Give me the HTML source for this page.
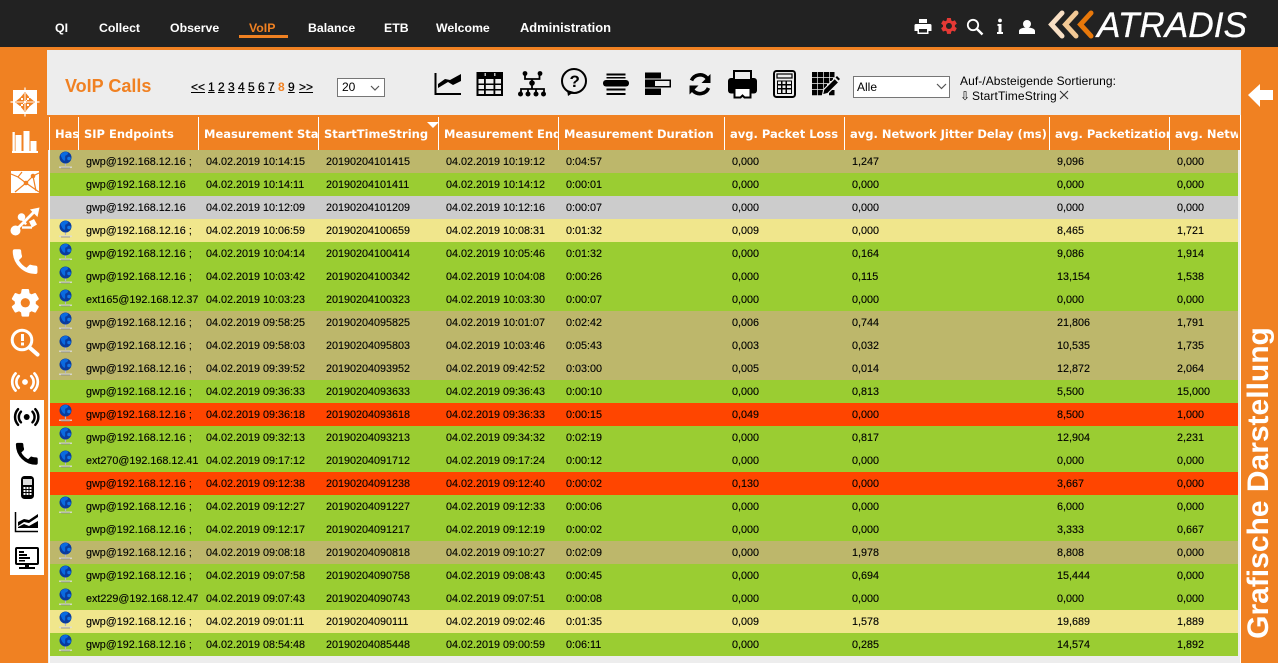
<!DOCTYPE html>
<html><head><meta charset="utf-8"><title>VoIP Calls</title>
<style>
*{box-sizing:border-box}
html,body{margin:0;padding:0;width:1278px;height:663px;overflow:hidden;background:#f08122;font-family:"Liberation Sans",Arial,sans-serif;color:#000}
.abs{position:absolute}
#top{position:absolute;left:0;top:0;width:1278px;height:47px;background:#222}
#top a{position:absolute;top:20px;font:bold 12.3px/16px "Liberation Sans",sans-serif;color:#fff;white-space:nowrap}
#top a.on{color:#f08122}
#ul{position:absolute;left:239px;top:35px;width:49px;height:3px;background:#f08122}
#panel{position:absolute;left:47px;top:50px;width:1194px;height:65px;background:#ededed}
#main{position:absolute;left:48px;top:115px;width:1193px;height:548px;background:#ededed}
#hbg{position:absolute;left:47px;top:115px;width:1193px;height:35px;background:#f08122}
#wl1{position:absolute;left:49px;top:117px;width:1px;height:546px;background:#fff}
#wl2{position:absolute;left:1240px;top:115px;width:1px;height:548px;background:#fff}
#wbox{position:absolute;left:10px;top:400px;width:34px;height:175px;background:#fff}
table{position:absolute;left:50px;top:117px;border-collapse:separate;border-spacing:0;table-layout:fixed;width:1188px}
th{height:33px;padding:0 0 0 5px;text-align:left;color:#fff;font:bold 11.5px/16px "DejaVu Sans",Verdana,sans-serif;white-space:nowrap;overflow:hidden;border-right:1px solid #fff;background:#f08122}
th:last-child{border-right:0}
td{height:23px;padding:1px 0 0 7px;font-size:10.8px;line-height:22px;white-space:nowrap;overflow:hidden;color:#000;-webkit-text-stroke:.12px #000}
tr{height:23px}
.o td{background:#bdb76b}.g td{background:#9acd32}.s td{background:#ccc}.y td{background:#f0e68c}.r td{background:#ff4500}
#title{position:absolute;left:65px;top:76px;font:bold 18px/20px "Liberation Sans",sans-serif;color:#f08122;white-space:nowrap}
#pg span{position:absolute;top:80px;font-size:12px;line-height:14px;text-decoration:underline;color:#000;-webkit-text-stroke:.25px #000}
#pg b{position:absolute;top:80px;font-size:12px;line-height:14px;color:#f08122}
.sel{position:absolute;background:#fff;border:1px solid #767676;font-size:12px;padding-left:4px;color:#000}
#s1{left:337px;top:78px;width:48px;height:19px;line-height:17px}
#s2{left:853px;top:76px;width:97px;height:22px;line-height:20px;padding-left:3px}
#lab{position:absolute;left:960px;top:74px;font-size:12px;line-height:15px;white-space:nowrap;letter-spacing:.07px}
.sr{position:absolute;top:89px;font-size:12px;line-height:15px;white-space:nowrap}
#vert{position:absolute;left:1259px;top:483px;transform:translate(-50%,-50%) rotate(-90deg);font:bold 30px/34px "Liberation Sans",sans-serif;color:#fff;white-space:nowrap}
svg{position:absolute;left:0;top:0;pointer-events:none}
</style></head><body>
<div id="top">
<a style="left:55px">QI</a><a style="left:99px">Collect</a><a style="left:170px">Observe</a><a class="on" style="left:249px">VoIP</a><a style="left:308px">Balance</a><a style="left:384px">ETB</a><a style="left:436px">Welcome</a><a style="left:520px;font-size:12.9px">Administration</a>
<div id="ul"></div>
</div>
<div id="panel"></div>
<div id="main"></div>
<div id="hbg"></div>
<div id="wl1"></div><div id="wl2"></div>
<div id="wbox"></div>
<div id="title">VoIP Calls</div>
<div id="pg">
<span style="left:191px">&lt;&lt;</span><span style="left:208px">1</span><span style="left:218px">2</span><span style="left:228px">3</span><span style="left:238px">4</span><span style="left:248px">5</span><span style="left:258px">6</span><span style="left:268px">7</span><b style="left:278px">8</b><span style="left:288px">9</span><span style="left:299px">&gt;&gt;</span>
</div>
<div class="sel" id="s1">20</div>
<div class="sel" id="s2">Alle</div>
<div id="lab">Auf-/Absteigende Sortierung:</div>
<div class="sr" style="left:960px">&#8681;</div>
<div class="sr" style="left:972px;letter-spacing:.13px">StartTimeString</div>

<div id="vert">Grafische Darstellung</div>

<table>
<colgroup><col style="width:29px"><col style="width:120px"><col style="width:120px"><col style="width:120px"><col style="width:120px"><col style="width:166px"><col style="width:120px"><col style="width:205px"><col style="width:120px"><col style="width:68px"></colgroup>
<tr style="height:33px"><th>Has</th><th>SIP Endpoints</th><th>Measurement Start</th><th>StartTimeString</th><th>Measurement End</th><th>Measurement Duration</th><th>avg. Packet Loss</th><th>avg. Network Jitter Delay (ms)</th><th>avg. Packetization</th><th>avg. Network</th></tr>
<tr class="o"><td></td><td>gwp@192.168.12.16 ;</td><td>04.02.2019 10:14:15</td><td>20190204101415</td><td>04.02.2019 10:19:12</td><td>0:04:57</td><td>0,000</td><td>1,247</td><td>9,096</td><td>0,000</td></tr>
<tr class="g"><td></td><td>gwp@192.168.12.16</td><td>04.02.2019 10:14:11</td><td>20190204101411</td><td>04.02.2019 10:14:12</td><td>0:00:01</td><td>0,000</td><td>0,000</td><td>0,000</td><td>0,000</td></tr>
<tr class="s"><td></td><td>gwp@192.168.12.16</td><td>04.02.2019 10:12:09</td><td>20190204101209</td><td>04.02.2019 10:12:16</td><td>0:00:07</td><td>0,000</td><td>0,000</td><td>0,000</td><td>0,000</td></tr>
<tr class="y"><td></td><td>gwp@192.168.12.16 ;</td><td>04.02.2019 10:06:59</td><td>20190204100659</td><td>04.02.2019 10:08:31</td><td>0:01:32</td><td>0,009</td><td>0,000</td><td>8,465</td><td>1,721</td></tr>
<tr class="g"><td></td><td>gwp@192.168.12.16 ;</td><td>04.02.2019 10:04:14</td><td>20190204100414</td><td>04.02.2019 10:05:46</td><td>0:01:32</td><td>0,000</td><td>0,164</td><td>9,086</td><td>1,914</td></tr>
<tr class="g"><td></td><td>gwp@192.168.12.16 ;</td><td>04.02.2019 10:03:42</td><td>20190204100342</td><td>04.02.2019 10:04:08</td><td>0:00:26</td><td>0,000</td><td>0,115</td><td>13,154</td><td>1,538</td></tr>
<tr class="g"><td></td><td>ext165@192.168.12.37</td><td>04.02.2019 10:03:23</td><td>20190204100323</td><td>04.02.2019 10:03:30</td><td>0:00:07</td><td>0,000</td><td>0,000</td><td>0,000</td><td>0,000</td></tr>
<tr class="o"><td></td><td>gwp@192.168.12.16 ;</td><td>04.02.2019 09:58:25</td><td>20190204095825</td><td>04.02.2019 10:01:07</td><td>0:02:42</td><td>0,006</td><td>0,744</td><td>21,806</td><td>1,791</td></tr>
<tr class="o"><td></td><td>gwp@192.168.12.16 ;</td><td>04.02.2019 09:58:03</td><td>20190204095803</td><td>04.02.2019 10:03:46</td><td>0:05:43</td><td>0,003</td><td>0,032</td><td>10,535</td><td>1,735</td></tr>
<tr class="o"><td></td><td>gwp@192.168.12.16 ;</td><td>04.02.2019 09:39:52</td><td>20190204093952</td><td>04.02.2019 09:42:52</td><td>0:03:00</td><td>0,005</td><td>0,014</td><td>12,872</td><td>2,064</td></tr>
<tr class="g"><td></td><td>gwp@192.168.12.16 ;</td><td>04.02.2019 09:36:33</td><td>20190204093633</td><td>04.02.2019 09:36:43</td><td>0:00:10</td><td>0,000</td><td>0,813</td><td>5,500</td><td>15,000</td></tr>
<tr class="r"><td></td><td>gwp@192.168.12.16 ;</td><td>04.02.2019 09:36:18</td><td>20190204093618</td><td>04.02.2019 09:36:33</td><td>0:00:15</td><td>0,049</td><td>0,000</td><td>8,500</td><td>1,000</td></tr>
<tr class="g"><td></td><td>gwp@192.168.12.16 ;</td><td>04.02.2019 09:32:13</td><td>20190204093213</td><td>04.02.2019 09:34:32</td><td>0:02:19</td><td>0,000</td><td>0,817</td><td>12,904</td><td>2,231</td></tr>
<tr class="g"><td></td><td>ext270@192.168.12.41</td><td>04.02.2019 09:17:12</td><td>20190204091712</td><td>04.02.2019 09:17:24</td><td>0:00:12</td><td>0,000</td><td>0,000</td><td>0,000</td><td>0,000</td></tr>
<tr class="r"><td></td><td>gwp@192.168.12.16 ;</td><td>04.02.2019 09:12:38</td><td>20190204091238</td><td>04.02.2019 09:12:40</td><td>0:00:02</td><td>0,130</td><td>0,000</td><td>3,667</td><td>0,000</td></tr>
<tr class="g"><td></td><td>gwp@192.168.12.16 ;</td><td>04.02.2019 09:12:27</td><td>20190204091227</td><td>04.02.2019 09:12:33</td><td>0:00:06</td><td>0,000</td><td>0,000</td><td>6,000</td><td>0,000</td></tr>
<tr class="g"><td></td><td>gwp@192.168.12.16 ;</td><td>04.02.2019 09:12:17</td><td>20190204091217</td><td>04.02.2019 09:12:19</td><td>0:00:02</td><td>0,000</td><td>0,000</td><td>3,333</td><td>0,667</td></tr>
<tr class="o"><td></td><td>gwp@192.168.12.16 ;</td><td>04.02.2019 09:08:18</td><td>20190204090818</td><td>04.02.2019 09:10:27</td><td>0:02:09</td><td>0,000</td><td>1,978</td><td>8,808</td><td>0,000</td></tr>
<tr class="g"><td></td><td>gwp@192.168.12.16 ;</td><td>04.02.2019 09:07:58</td><td>20190204090758</td><td>04.02.2019 09:08:43</td><td>0:00:45</td><td>0,000</td><td>0,694</td><td>15,444</td><td>0,000</td></tr>
<tr class="g"><td></td><td>ext229@192.168.12.47</td><td>04.02.2019 09:07:43</td><td>20190204090743</td><td>04.02.2019 09:07:51</td><td>0:00:08</td><td>0,000</td><td>0,000</td><td>0,000</td><td>0,000</td></tr>
<tr class="y"><td></td><td>gwp@192.168.12.16 ;</td><td>04.02.2019 09:01:11</td><td>20190204090111</td><td>04.02.2019 09:02:46</td><td>0:01:35</td><td>0,009</td><td>1,578</td><td>19,689</td><td>1,889</td></tr>
<tr class="g"><td></td><td>gwp@192.168.12.16 ;</td><td>04.02.2019 08:54:48</td><td>20190204085448</td><td>04.02.2019 09:00:59</td><td>0:06:11</td><td>0,000</td><td>0,285</td><td>14,574</td><td>1,892</td></tr>
</table>

<svg width="1278" height="663" viewBox="0 0 1278 663" xmlns="http://www.w3.org/2000/svg">
<defs>
<g id="globe"><path d="M59 166.500h13v1.500H59z" fill="#dcdcdc" opacity=".85"/><path d="M61 168h9" stroke="#8a8a8a" stroke-width=".8"/><path d="M65.500 163v3" stroke="#b0b4c8" stroke-width="1.200"/><circle cx="65.500" cy="157.500" r="6" fill="#0a3c9e"/><path d="M60.500 155c2-3 5-3.500 7-2.800 1.500 1.500-.5 3-2 3.300-1 2 .5 3.500-1 5.500-2-1-3-3.500-4-6z" fill="#0a6ae0"/><circle cx="69" cy="158.500" r="1.800" fill="#1476e8"/></g>
<path id="phone" d="M6.600 10.800c1.400 2.800 3.800 5.100 6.600 6.600l2.200-2.200c.3-.3.7-.4 1-.2 1.100.4 2.300.6 3.600.6.600 0 1 .4 1 1V20c0 .6-.4 1-1 1C10.600 21 3 13.400 3 4c0-.6.4-1 1-1h3.500c.6 0 1 .4 1 1 0 1.300.2 2.500.6 3.600.1.300 0 .7-.2 1l-2.300 2.200z"/>
<path id="gear" fill-rule="evenodd" d="M19.140 12.940c.04-.3.06-.61.06-.94 0-.32-.02-.64-.07-.94l2.030-1.580c.18-.14.23-.41.12-.61l-1.920-3.320c-.12-.22-.37-.29-.59-.22l-2.390.96c-.5-.38-1.030-.7-1.620-.94l-.36-2.540c-.04-.24-.24-.41-.48-.41h-3.840c-.24 0-.43.17-.47.41l-.36 2.540c-.59.24-1.130.57-1.620.94l-2.390-.96c-.22-.08-.47 0-.59.22L2.740 8.870c-.12.21-.08.47.12.61l2.030 1.580c-.05.3-.09.63-.09.94s.02.64.07.94l-2.030 1.580c-.18.14-.23.41-.12.61l1.920 3.320c.12.22.37.29.59.22l2.390-.96c.5.38 1.030.7 1.620.94l.36 2.540c.05.24.24.41.48.41h3.840c.24 0 .44-.17.47-.41l.36-2.540c.59-.24 1.130-.56 1.620-.94l2.390.96c.22.08.47 0 .59-.22l1.920-3.320c.12-.22.07-.47-.12-.61l-2.010-1.580zM12 15.600c-1.980 0-3.600-1.620-3.600-3.600s1.620-3.600 3.600-3.600 3.600 1.620 3.600 3.600-1.620 3.600-3.600 3.600z"/>
<g id="signal" fill="none" stroke-width="3" stroke-linecap="round"><path d="M-7 -6.500a9.500 9.500 0 0 0 0 13M7 -6.500a9.500 9.500 0 0 1 0 13M-10.500 -9.500a14 14 0 0 0 0 19M10.500 -9.500a14 14 0 0 1 0 19"/></g>
</defs>

<!-- globes -->
<use href="#globe"/><use href="#globe" y="69"/><use href="#globe" y="92"/><use href="#globe" y="115"/><use href="#globe" y="138"/><use href="#globe" y="161"/><use href="#globe" y="184"/><use href="#globe" y="207"/><use href="#globe" y="253"/><use href="#globe" y="276"/><use href="#globe" y="299"/><use href="#globe" y="345"/><use href="#globe" y="391"/><use href="#globe" y="414"/><use href="#globe" y="437"/><use href="#globe" y="460"/><use href="#globe" y="483"/>

<!-- sort triangle -->
<path d="M427 122h12l-6 6z" fill="#fff"/>
<!-- sort remove x -->
<path d="M1060 91l8 8M1068 91l-8 8" stroke="#333" stroke-width="1.100" fill="none"/>

<!-- top right icons -->
<g fill="#fff">
<path fill-rule="evenodd" d="M919 19h8v4h-8zM916 24h14a1.500 1.500 0 0 1 1.500 1.500V31h-3v3h-11v-3h-3v-5.500a1.500 1.500 0 0 1 1.500-1.500zM919 29v3.500h8V29z"/>
</g>
<use href="#gear" fill="#e53935" transform="translate(939 16) scale(.83)"/>
<circle cx="973" cy="25" r="5.200" fill="none" stroke="#fff" stroke-width="1.800"/><path d="M977 29l5.500 5.500" stroke="#fff" stroke-width="2.400"/>
<g fill="#fff"><circle cx="1000" cy="20.500" r="1.900"/><path d="M997.500 24h4v8h1.500v2h-6v-2h1.500v-6h-1z"/>
<circle cx="1027" cy="24" r="4"/><path d="M1019 34v-3c0-2 3-3.500 8-3.500s8 1.500 8 3.500v3z"/></g>

<!-- logo -->
<g fill="none" stroke-width="5" stroke-linejoin="miter" stroke-linecap="round">
<path d="M1062 13L1051.500 24.500L1062 36" stroke="#f8dfc4"/>
<path d="M1076 13L1065.500 24.500L1076 36" stroke="#f3c995"/>
<path d="M1091 13L1080.500 24.500L1091 36" stroke="#e8780a"/>
</g>
<text x="1097" y="37" font-family="Liberation Sans,sans-serif" font-style="italic" font-size="35" fill="#fff" stroke="#fff" stroke-width=".3" textLength="150" lengthAdjust="spacingAndGlyphs">ATRADIS</text>

<!-- select chevrons -->
<path d="M371 86l4 4 4-4" fill="none" stroke="#555" stroke-width="1.200"/>
<path d="M937 84l4.500 4.500 4.500-4.500" fill="none" stroke="#555" stroke-width="1.200"/>

<!-- toolbar -->
<g fill="#000" stroke="none">
<!-- chart -->
<path d="M435.500 73v21H461" fill="none" stroke="#000" stroke-width="2"/>
<path d="M438 84l7-5 5 1 11-6v7l-8 4-5-3-10 6z"/>
<!-- grid -->
<path fill-rule="evenodd" d="M476.500 72h26.500v24h-26.500zM478.500 79v15h22.500V79z"/>
<path d="M476.500 83.500h26v1.500h-26zM476.500 89h26v1.500h-26zM484 78h1.800v17H484zM493.500 78h1.800v17h-1.800z"/>
<path d="M484.500 73h1.500v3h-1.500zM494 73h1.500v3H494z" fill="#bbb"/>
<!-- org -->
<circle cx="525" cy="73.500" r="2.400"/><circle cx="540" cy="73.500" r="2.400"/><circle cx="532" cy="83" r="2.800"/>
<path d="M525 74v5h14.500v-5M532 79v10M521 94v-5h23v5M528 89v5M536 89v5" fill="none" stroke="#000" stroke-width="1.800"/>
<circle cx="520.500" cy="94" r="2.500"/><circle cx="528" cy="94" r="2.500"/><circle cx="536" cy="94" r="2.500"/><circle cx="543.500" cy="94" r="2.500"/>
<!-- help -->
<circle cx="574" cy="81" r="12" fill="none" stroke="#000" stroke-width="2"/>
<path d="M567 90l1 6 6-4z"/>
<text x="569.500" y="87" font-family="Liberation Sans,sans-serif" font-weight="bold" font-size="17">?</text>
<!-- align -->
<path d="M606.500 73.500h19v2h-19zM606.500 77h19v1.500h-19zM606.500 88.500h19v2h-19zM606.500 93h19v2h-19z"/>
<rect x="603" y="80" width="26" height="6.500" rx="3"/>
<!-- gantt -->
<path d="M645 72.500h16v6h-16zM645 88.500h16v6.500h-16z"/>
<path fill-rule="evenodd" d="M645 79.500h26v8h-26zM655 81v5h14.500v-5z"/>
<path d="M650 80.500h2.500v2.200h2.500v2h-2.500V87H650v-2.300h-4v-2h4z"/>
<!-- refresh -->
<path d="M691.500 80.500a9.300 9.300 0 0 1 15.500-2.500M708.500 88a9.300 9.300 0 0 1-15.500 2.500" fill="none" stroke="#000" stroke-width="3.600"/>
<path d="M710.500 74v9h-9zM689.500 94.500v-9h9z"/>
<!-- printer -->
<rect x="728" y="78" width="29" height="15.500" rx="3"/>
<rect x="734" y="71" width="17" height="9" fill="#ededed" stroke="#000" stroke-width="2"/>
<path d="M734.500 88h16v9.500h-6l-2-2-2 2h-6z" fill="#fff" stroke="#000" stroke-width="2"/>
<!-- calc -->
<rect x="774" y="71" width="21" height="26" rx="2.500" fill="none" stroke="#000" stroke-width="2"/>
<rect x="777" y="74" width="15" height="4" fill="none" stroke="#000" stroke-width="1.200"/>
<path fill-rule="evenodd" d="M777 80.500h15v13.500h-15zM778 81.500v2.500h3v-2.500zM782.500 81.500v2.500h3v-2.500zM787 81.500v2.500h4v-2.500zM778 85.500v2.500h3v-2.500zM782.500 85.500v2.500h3v-2.500zM787 85.500v2.500h4v-2.500zM778 89.500v3.500h3v-3.500zM782.500 89.500v3.500h3v-3.500zM787 89.500v3.500h4v-3.500z"/>
<!-- edit grid -->
<path d="M812 72h5.300v5.300H812zM818 72h5.300v5.300H818zM824 72h5.300v5.300H824zM830 72h4.500v5.300H830zM812 78h5.300v5.300H812zM818 78h5.300v5.300H818zM824 78h5.300v5.300H824zM830 78h3v3h-3zM812 84h5.300v5.300H812zM818 84h5.300v5.300H818zM824 84h3v4h-3zM812 90h5.300v5.300H812zM818 90h5.300v5.300H818zM829 90h5.500v5.300H829z"/>
<path d="M822.500 95l1.200-5.500 11-11 4 4-11 11z" stroke="#ededed" stroke-width="1.200"/>
<path d="M835.500 77.500l1.500-1.500 3 3-1.500 1.500z"/>
</g>

<!-- back arrow -->
<path d="M1248 95l12-11v6h13v10h-13v7z" fill="#fff"/>

<!-- left sidebar icons -->
<rect x="13" y="90" width="24" height="24" fill="#fff"/>
<path d="M25 87.500v29M10.500 102h29" stroke="#fff" stroke-width="1.200"/>
<path d="M25 92l5 6h-3v3h-4v-3h-3zM25 112l5-6h-3v-3h-4v3h-3zM15 102l6-5v3h3v4h-3v3zM35 102l-6-5v3h-3v4h3v3z" fill="#f08122"/>
<path d="M25 93v18M16 102h18" stroke="#fff" stroke-width="1"/>

<g fill="#fff"><path d="M12.500 132h2.300v19h-2.300zM15.500 135h6v16h-6zM23.500 131h6v20h-6zM30.500 141h6v10h-6zM12 151h26v2H12z"/></g>

<rect x="11" y="171" width="28" height="22" fill="#fff"/>
<path d="M11 174l7 3 8 6 7-7 6-3M18 177l4-5M26 183l-11 9M26 183l13 9M33 176l3 15" stroke="#f08122" stroke-width="1.200" fill="none"/>
<circle cx="33" cy="176" r="2.300" fill="#f08122"/><circle cx="26" cy="183" r="2.300" fill="#f08122"/>

<g fill="#fff"><circle cx="15.500" cy="230.500" r="5"/><path d="M15.500 230.500L36 210" stroke="#fff" stroke-width="2.800"/><path d="M39.500 207.500l-9.500 2 7.500 7.500z"/>
<path d="M21.500 217.500l4.500 7" stroke="#fff" stroke-width="2.400"/><circle cx="21.500" cy="217" r="3.800"/><path d="M22 227.500l10 0" stroke="#fff" stroke-width="2.400"/><path d="M29 221.500l5-2.500 3 5.500-5 3z"/></g>

<use href="#phone" fill="#fff" stroke="#fff" stroke-width="1" transform="translate(9.500 246) scale(1.300)"/>
<use href="#gear" fill="#fff" stroke="#fff" stroke-width=".6" transform="translate(8.500 286) scale(1.400)"/>

<circle cx="22" cy="340" r="9.800" fill="none" stroke="#fff" stroke-width="3"/><path d="M29.500 347.500L37.500 354.500" stroke="#fff" stroke-width="4" stroke-linecap="round"/>
<path d="M21 334h3v7h-3zM21 342.500h3v3h-3z" fill="#fff"/>

<g transform="translate(25 382) scale(.9)" stroke="#fff"><use href="#signal"/><circle r="3.200" fill="#fff" stroke="none"/></g>
<g transform="translate(26.700 417) scale(.82)" stroke="#000"><use href="#signal"/><circle r="3.600" fill="#000" stroke="none"/></g>
<use href="#phone" fill="#000" stroke="#000" stroke-width="1" transform="translate(13 440) scale(1.150)"/>

<rect x="21" y="476" width="13" height="23" rx="3.500" fill="#000"/>
<rect x="23" y="479" width="9" height="6" fill="#ddd"/>
<path d="M23.500 487h2v2h-2zM26.500 487h2v2h-2zM29.500 487h2v2h-2zM23.500 490h2v2h-2zM26.500 490h2v2h-2zM29.500 490h2v2h-2zM23.500 493h2v2h-2zM26.500 493h2v2h-2zM29.500 493h2v2h-2z" fill="#fff"/>

<path d="M15.500 512v19.500H38" fill="none" stroke="#000" stroke-width="1.500"/>
<path d="M18 522l6-3 5 1 9-6v3l-9 6-5-1-6 4zM18 527l6-3 5 2 9-5v7H18z"/>

<rect x="16" y="548" width="22" height="16" rx="1" fill="none" stroke="#000" stroke-width="2"/>
<path d="M19 551h5v2h-5zM19 554h8v2h-8zM19 557h11v2h-11zM19 560h6v1.500h-6zM25 564h4v3h-4zM19 567h16v2H19z"/>
</svg>
</body></html>
